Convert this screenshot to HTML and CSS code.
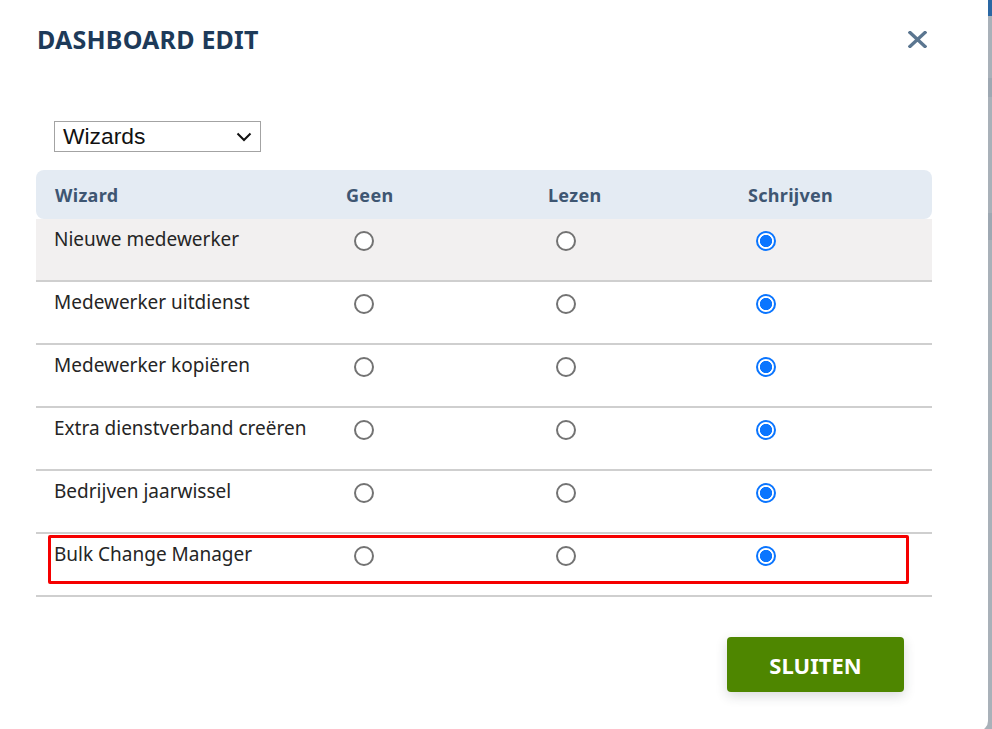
FILE: index.html
```html
<!DOCTYPE html>
<html lang="nl">
<head>
<meta charset="utf-8">
<title>Dashboard edit</title>
<link rel="stylesheet" href="styles.css">
</head>
<body>
<div class="page">
  <div class="modal">
    <div class="modal-head">
      <h1 class="title">DASHBOARD EDIT</h1>
      <button class="close" aria-label="Sluiten">
        <svg width="19" height="17" viewBox="0 0 19 17"><path d="M2 1.5 L17 15.5 M17 1.5 L2 15.5" stroke="#5b7690" stroke-width="3.3" stroke-linecap="square" fill="none"/></svg>
      </button>
    </div>

    <div class="select">
      <span class="select-text">Wizards</span>
      <svg class="chev" width="16" height="10" viewBox="0 0 16 10"><path d="M1.5 1.5 L8 8 L14.5 1.5" stroke="#111" stroke-width="2" fill="none"/></svg>
    </div>

    <div class="table">
      <div class="thead">
        <div class="cell">Wizard</div>
        <div class="cell">Geen</div>
        <div class="cell">Lezen</div>
        <div class="cell">Schrijven</div>
      </div>

      <div class="row first">
        <div class="cell name">Nieuwe medewerker</div>
        <div class="cell"><span class="radio"></span></div>
        <div class="cell"><span class="radio"></span></div>
        <div class="cell"><span class="radio checked"></span></div>
      </div>
      <div class="row">
        <div class="cell name">Medewerker uitdienst</div>
        <div class="cell"><span class="radio"></span></div>
        <div class="cell"><span class="radio"></span></div>
        <div class="cell"><span class="radio checked"></span></div>
      </div>
      <div class="row">
        <div class="cell name">Medewerker kopiëren</div>
        <div class="cell"><span class="radio"></span></div>
        <div class="cell"><span class="radio"></span></div>
        <div class="cell"><span class="radio checked"></span></div>
      </div>
      <div class="row">
        <div class="cell name">Extra dienstverband creëren</div>
        <div class="cell"><span class="radio"></span></div>
        <div class="cell"><span class="radio"></span></div>
        <div class="cell"><span class="radio checked"></span></div>
      </div>
      <div class="row">
        <div class="cell name">Bedrijven jaarwissel</div>
        <div class="cell"><span class="radio"></span></div>
        <div class="cell"><span class="radio"></span></div>
        <div class="cell"><span class="radio checked"></span></div>
      </div>
      <div class="row marked">
        <div class="cell name">Bulk Change Manager</div>
        <div class="cell"><span class="radio"></span></div>
        <div class="cell"><span class="radio"></span></div>
        <div class="cell"><span class="radio checked"></span></div>
        <div class="highlight"></div>
      </div>
    </div>

    <div class="actions">
      <button class="btn">SLUITEN</button>
    </div>
  </div>
  <div class="side">
    <div class="side-top"></div>
    <div class="side-gap g1"></div>
    <div class="side-band b1"></div>
    <div class="side-gap g2"></div>
    <div class="side-band b2"></div>
    <div class="side-gap g3"></div>
  </div>
</div>
</body>
</html>
```

FILE: styles.css
```css
* { box-sizing: border-box; }
html, body { margin: 0; padding: 0; }
body {
  background: #a9b1b9;
  font-family: "Noto Sans", "Open Sans", sans-serif;
  color: #222;
}
.page {
  display: flex;
  width: 992px;
  height: 729px;
  overflow: hidden;
}
.modal {
  width: 988px;
  height: 731px;
  background: #fff;
  border-bottom-right-radius: 10px;
  padding: 0 56px 0 36px;
  flex: none;
}
.side {
  flex: 1;
  background: #a9b1b9;
  display: flex;
  flex-direction: column;
}
.side-top {
  height: 16px;
  background: #2a67a3;
}
.side-gap { background: #a9b1b9; }
.g1 { height: 62px; }
.g2 { height: 116px; }
.g3 { flex: 1; }
.side-band { background: #9ea8b2; }
.b1 { height: 19px; }
.b2 { height: 27px; }
.modal-head {
  display: flex;
  justify-content: space-between;
  align-items: center;
  height: 80px;
  padding-bottom: 2px;
}
.title {
  margin: 0;
  font-size: 25px;
  font-weight: 700;
  color: #1d3a59;
  letter-spacing: 0.2px;
  padding-left: 1px;
}
.close {
  border: 0;
  background: none;
  padding: 0;
  margin-right: 5px;
  display: flex;
}
.select {
  margin: 41px 0 0 18px;
  width: 207px;
  height: 31px;
  border: 1px solid #a3a3a3;
  display: flex;
  align-items: center;
  justify-content: space-between;
  padding: 0 8px 0 8px;
  font-family: "Liberation Sans", Arial, sans-serif;
  font-size: 22.8px;
  color: #111;
}
.chev { margin-top: 1px; }
.table {
  margin-top: 18px;
}
.thead, .row {
  display: grid;
  grid-template-columns: 291px 202px 200px 1fr;
}
.thead {
  height: 49px;
  background: #e4ebf3;
  border-radius: 8px;
  align-items: center;
  font-weight: 700;
  font-size: 18px;
  color: #3e5672;
  letter-spacing: 0.3px;
}
.cell { padding-left: 19px; }
.row {
  position: relative;
  height: 63px;
  border-bottom: 2px solid #cfcfcf;
  font-size: 19px;
  line-height: 26px;
  color: #252525;
}
.row.first { background: #f2f0f0; }
.row .cell { padding-top: 7px; }
.row .cell.name { padding-left: 18px; }
.radio {
  display: block;
  width: 20px;
  height: 20px;
  margin: 5px 0 0 8px;
  border-radius: 50%;
  border: 2px solid #737373;
  background: #fff;
}
.radio.checked {
  border: 2px solid #0a75ff;
  background: radial-gradient(circle, #0a75ff 0 5.8px, #fff 6.4px);
}
.highlight {
  position: absolute;
  left: 12px;
  top: 1px;
  width: 861px;
  height: 49px;
  border: 3px solid #f50000;
  border-radius: 2px;
  pointer-events: none;
}
.actions {
  display: flex;
  justify-content: flex-end;
  padding: 40px 28px 0 0;
}
.btn {
  width: 177px;
  height: 55px;
  border: 0;
  border-radius: 4px;
  background: #4e8600;
  color: #fff;
  font-family: "Noto Sans", "Open Sans", sans-serif;
  font-weight: 700;
  font-size: 22px;
  box-shadow: 0 4px 12px rgba(40, 50, 60, 0.18);
}
```
